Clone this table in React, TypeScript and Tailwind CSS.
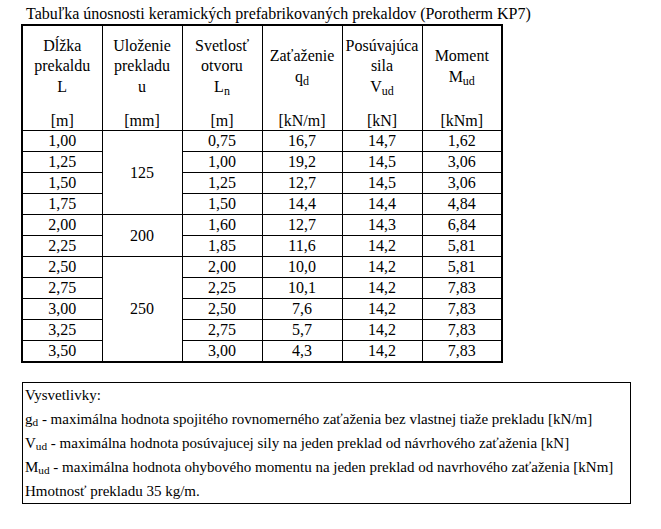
import type { ReactNode } from "react";

interface HeaderCol {
  lines: ReactNode[];
  unit: string;
}

const headers: HeaderCol[] = [
  { lines: ["Dĺžka", "prekaldu", "L"], unit: "[m]" },
  { lines: ["Uloženie", "prekladu", "u"], unit: "[mm]" },
  {
    lines: [
      "Svetlosť",
      "otvoru",
      <>
        L<sub>n</sub>
      </>,
    ],
    unit: "[m]",
  },
  {
    lines: [
      "Zaťaženie",
      <>
        q<sub>d</sub>
      </>,
    ],
    unit: "[kN/m]",
  },
  {
    lines: [
      "Posúvajúca",
      "sila",
      <>
        V<sub>ud</sub>
      </>,
    ],
    unit: "[kN]",
  },
  {
    lines: [
      "Moment",
      <>
        M<sub>ud</sub>
      </>,
    ],
    unit: "[kNm]",
  },
];

// [dĺžka, uloženie (null = merged), svetlosť, zaťaženie, sila, moment]
const rows: [string, { value: string; span: number } | null, string, string, string, string][] = [
  ["1,00", { value: "125", span: 4 }, "0,75", "16,7", "14,7", "1,62"],
  ["1,25", null, "1,00", "19,2", "14,5", "3,06"],
  ["1,50", null, "1,25", "12,7", "14,5", "3,06"],
  ["1,75", null, "1,50", "14,4", "14,4", "4,84"],
  ["2,00", { value: "200", span: 2 }, "1,60", "12,7", "14,3", "6,84"],
  ["2,25", null, "1,85", "11,6", "14,2", "5,81"],
  ["2,50", { value: "250", span: 5 }, "2,00", "10,0", "14,2", "5,81"],
  ["2,75", null, "2,25", "10,1", "14,2", "7,83"],
  ["3,00", null, "2,50", "7,6", "14,2", "7,83"],
  ["3,25", null, "2,75", "5,7", "14,2", "7,83"],
  ["3,50", null, "3,00", "4,3", "14,2", "7,83"],
];

const cell = "h-[21px] border border-black p-0 text-center align-middle leading-[18px]";

export default function App() {
  return (
    <div className="min-h-[529px] bg-white font-[family-name:Liberation_Serif] text-[16px] text-black">
      <div className="ml-[21px] w-[482px]">
        <p className="h-[24px] pl-[5px] pt-[4px] leading-[20px] whitespace-nowrap">
          Tabuľka únosnosti keramických prefabrikovaných prekaldov (Porotherm KP7)
        </p>

        <table className="w-[482px] table-fixed border-collapse border-2 border-black">
          <colgroup>
            {headers.map((_, i) => (
              <col key={i} className="w-[80px]" />
            ))}
          </colgroup>
          <thead>
            <tr>
              {headers.map((h) => (
                <th
                  key={h.unit + String(h.lines.length)}
                  className="h-[105px] border border-black p-0 align-top font-normal"
                >
                  <div className="flex h-[104px] flex-col items-center">
                    <div className="flex h-[82px] flex-col items-center justify-center leading-[20.5px]">
                      {h.lines.map((line, i) => (
                        <div key={i}>{line}</div>
                      ))}
                    </div>
                    <div className="mt-[5px] leading-[18px]">{h.unit}</div>
                  </div>
                </th>
              ))}
            </tr>
          </thead>
          <tbody>
            {rows.map(([len, support, opening, load, shear, moment]) => (
              <tr key={len}>
                <td className={cell}>{len}</td>
                {support ? (
                  <td rowSpan={support.span} className={cell}>
                    {support.value}
                  </td>
                ) : null}
                <td className={cell}>{opening}</td>
                <td className={cell}>{load}</td>
                <td className={cell}>{shear}</td>
                <td className={cell}>{moment}</td>
              </tr>
            ))}
          </tbody>
        </table>
      </div>

      <div className="ml-[22px] mt-[19px] w-[609px] border border-black pl-[2px] text-[15px] leading-[24px] whitespace-nowrap">
        <div>Vysvetlivky:</div>
        <div>
          g<sub>d</sub> - maximálna hodnota spojitého rovnomerného zaťaženia bez vlastnej tiaže prekladu [kN/m]
        </div>
        <div>
          V<sub>ud</sub> - maximálna hodnota posúvajucej sily na jeden preklad od návrhového zaťaženia [kN]
        </div>
        <div>
          M<sub>ud</sub> - maximálna hodnota ohybového momentu na jeden preklad od navrhového zaťaženia [kNm]
        </div>
        <div>Hmotnosť prekladu 35 kg/m.</div>
      </div>
    </div>
  );
}
